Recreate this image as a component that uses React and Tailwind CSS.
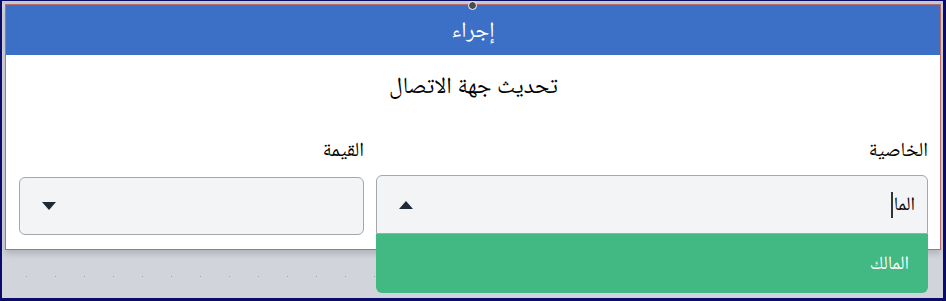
import React from "react";

const font = {
  fontFamily:
    '"Liberation Serif", "Noto Naskh Arabic", "Noto Serif Arabic", "Amiri", "FreeSerif", serif',
};

function Caret({ up }) {
  return (
    <svg width="14" height="8" viewBox="0 0 14 8" className="text-[#1f2937]">
      {up ? (
        <path d="M0 8 L7 0 L14 8 Z" fill="currentColor" />
      ) : (
        <path d="M0 0 L14 0 L7 8 Z" fill="currentColor" />
      )}
    </svg>
  );
}

export default function App() {
  const dots = Array.from({ length: 32 });
  return (
    <div
      className="relative w-[946px] h-[301px] overflow-hidden border-t border-l-2 border-r-[3px] border-b-[3px] border-[#0b0b6b] bg-[#d1d5db]"
      style={font}
    >
      {/* top strip */}
      <div className="h-[3px] bg-[#c7c9d1]" />
      {/* handle */}
      <div className="absolute left-[466px] top-0 w-[9px] h-[9px] rounded-full bg-[#4b4b4b] border border-white" />

      {/* modal */}
      <div className="ml-[3px] mr-[2px] border border-[#b96d6d] bg-white shadow-[0_4px_6px_rgba(0,0,0,0.15)]" dir="rtl">
        <div className="h-[50px] bg-[#3c70c6] flex items-center justify-center text-white text-[22px] leading-[30px]">
          إجراء
        </div>
        <div className="pt-[16px] pb-[14px] pl-[13px] pr-[12px]">
          <div className="text-center text-[23px] text-black leading-[30px]">
            تحديث جهة الاتصال
          </div>
          <div className="grid grid-cols-[552px_1fr] gap-x-[12px] mt-[35px]">
            <div className="flex flex-col">
              <div className="text-[20px] leading-[26px] text-black mb-[13px]">الخاصية</div>
              <div className="relative">
                <div className="h-[59px] rounded-t-[6px] border border-[#a3a7ae] bg-[#f3f4f6] flex items-center pr-[12px] pl-[22px]">
                  <span className="text-[19px] text-black">الما</span>
                  <span className="w-[2px] h-[26px] bg-[#333] mr-[1px]" />
                  <span className="mr-auto"><Caret up /></span>
                </div>
                <div className="absolute left-0 right-0 top-[59px] h-[59px] rounded-b-[6px] bg-[#42b883] flex items-center pr-[19px] text-white text-[19px]">
                  المالك
                </div>
              </div>
            </div>
            <div className="flex flex-col">
              <div className="text-[20px] leading-[26px] text-black mb-[15px]">القيمة</div>
              <div className="h-[58px] rounded-[6px] border border-[#a3a7ae] bg-[#f3f4f6] flex items-center pl-[22px]">
                <span className="mr-auto"><Caret /></span>
              </div>
            </div>
          </div>
        </div>
      </div>

      {/* dotted row behind */}
      <div className="mt-[26px] ml-[24px] flex gap-[28px]">
        {dots.map((_, i) => (
          <span key={i} className="w-[1px] h-[1px] bg-[#9ca3af]" />
        ))}
      </div>
    </div>
  );
}
